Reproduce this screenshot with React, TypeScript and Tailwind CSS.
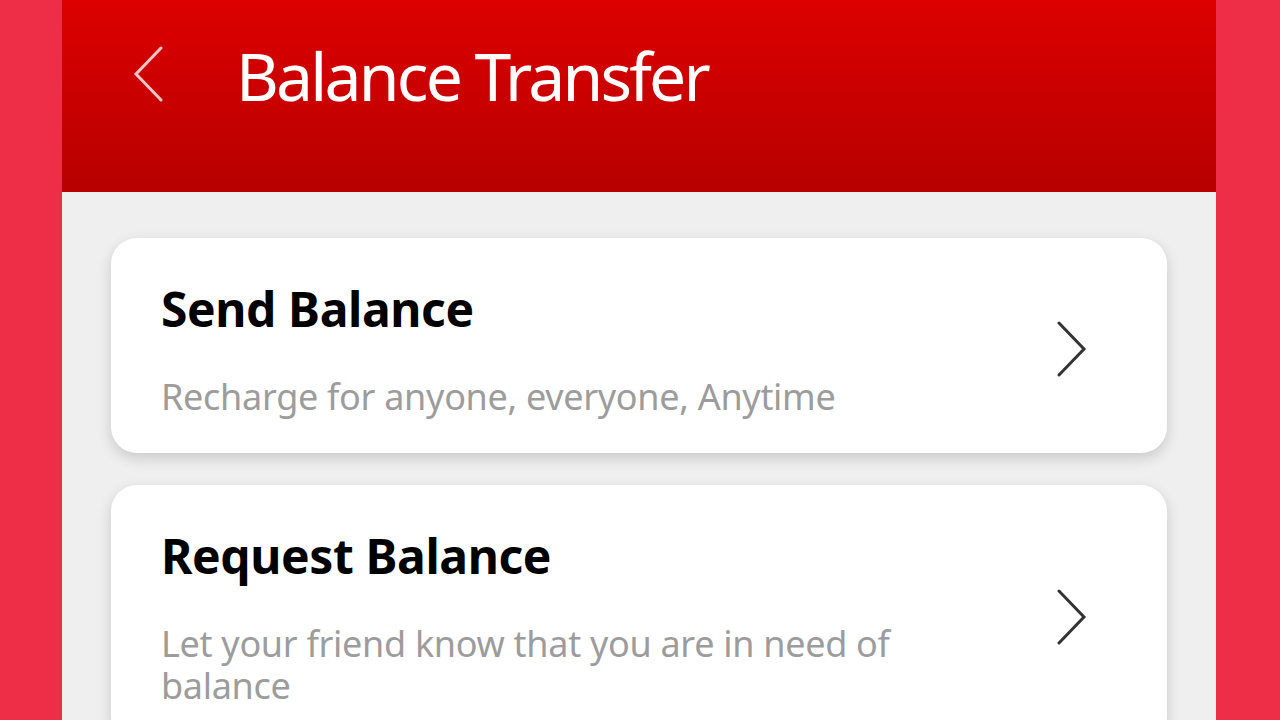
import React from "react";

function Chevron({ dir, className }: { dir: "left" | "right"; className?: string }) {
  return (
    <svg viewBox="0 0 30 56" className={className} fill="none" stroke="currentColor" strokeWidth={3} strokeLinecap="round" strokeLinejoin="miter">
      {dir === "left" ? <path d="M28 2 L3 28 L28 54" /> : <path d="M2 2 L27 28 L2 54" />}
    </svg>
  );
}

function Card({ title, subtitle }: { title: string; subtitle: string }) {
  return (
    <div className="flex shrink-0 items-center rounded-[26px] bg-white pl-[50px] pr-[80px] pt-[41px] pb-[35px] shadow-[0_5px_14px_rgba(0,0,0,0.16)]">
      <div className="flex-1">
        <div className="text-[48px] font-bold leading-[60px] tracking-[-0.4px] text-black">{title}</div>
        <div className="mt-[37px] max-w-[760px] text-[36px] leading-[42px] tracking-[-0.3px] text-[#9c9c9c]">{subtitle}</div>
      </div>
      <Chevron dir="right" className="h-[56px] w-[30px] text-[#333333]" />
    </div>
  );
}

export default function App() {
  return (
    <div className="flex h-[720px] w-[1280px] overflow-hidden bg-[#ee2e46]" style={{ fontFamily: '"Noto Sans", sans-serif' }}>
      <div className="ml-[62px] flex w-[1154px] flex-col bg-[#efefef]">
        <div className="flex h-[192px] shrink-0 items-start bg-gradient-to-b from-[#dd0000] to-[#b70000] pt-[35px]">
          <Chevron dir="left" className="ml-[71px] mt-[11px] h-[56px] w-[30px] text-[#f4c6c6]" />
          <div className="ml-[73px] text-[66px] leading-[80px] tracking-[-2.8px] text-white">Balance Transfer</div>
        </div>
        <div className="flex flex-col gap-[32px] px-[49px] pt-[46px]">
          <Card title="Send Balance" subtitle="Recharge for anyone, everyone, Anytime" />
          <Card title="Request Balance" subtitle="Let your friend know that you are in need of balance" />
        </div>
      </div>
    </div>
  );
}
